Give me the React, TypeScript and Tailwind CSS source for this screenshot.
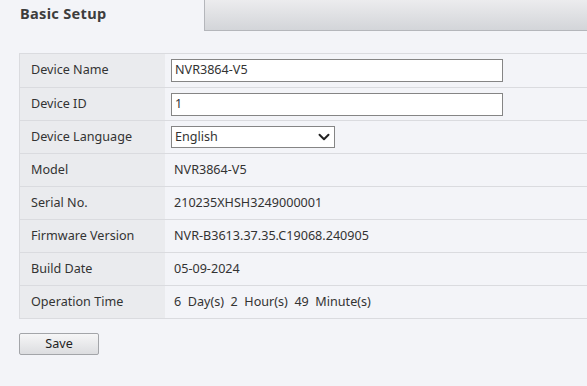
import { ChevronDown } from 'lucide-react';

const rows: { label: string; value?: string; kind?: 'input' | 'select' }[] = [
  { label: 'Device Name', value: 'NVR3864-V5', kind: 'input' },
  { label: 'Device ID', value: '1', kind: 'input' },
  { label: 'Device Language', value: 'English', kind: 'select' },
  { label: 'Model', value: 'NVR3864-V5' },
  { label: 'Serial No.', value: '210235XHSH3249000001' },
  { label: 'Firmware Version', value: 'NVR-B3613.37.35.C19068.240905' },
  { label: 'Build Date', value: '05-09-2024' },
  { label: 'Operation Time', value: '6\u00a0 Day(s)\u00a0 2\u00a0 Hour(s)\u00a0 49\u00a0 Minute(s)' },
];

export default function App() {
  return (
    <div className="w-[587px] h-[386px] overflow-hidden bg-[#f3f4f8] text-[#333] text-[12.6px]"
      style={{ fontFamily: '"Segoe UI", "Noto Sans", "Open Sans", sans-serif' }}>
      {/* Tab strip */}
      <div className="flex h-[31px]">
        <div className="w-[204px] pl-[20px] pt-[3px] text-[14.6px] font-bold text-[#3d3d3d] tracking-[0.3px]">
          Basic Setup
        </div>
        <div className="flex-1 border-l border-b border-[#b4b6bb] bg-gradient-to-b from-[#ececee] to-[#d3d5d9]" />
      </div>

      {/* Info table */}
      <div className="mt-[22px] ml-[19px] border-t border-b border-l border-[#dadbdf]">
        {rows.map((row, i) => (
          <div key={i} className={`flex h-[33px] ${i > 0 ? 'border-t border-[#dadbdf]' : ''}`}>
            <div className="w-[145px] bg-[#eaebee] pl-[11px] flex items-center">{row.label}</div>
            <div className="flex-1 flex items-center pl-[6px]">
              {row.kind === 'input' && (
                <div className="w-[332px] h-[23px] bg-white border border-[#858585] flex items-center px-[3px]">
                  {row.value}
                </div>
              )}
              {row.kind === 'select' && (
                <div className="w-[164px] h-[22px] bg-white border border-[#858585] flex items-center justify-between pl-[3px] pr-[1px]">
                  <span>{row.value}</span>
                  <ChevronDown size={18} strokeWidth={2.6} className="text-[#222]" />
                </div>
              )}
              {!row.kind && <span className="pl-[3px] whitespace-pre">{row.value}</span>}
            </div>
          </div>
        ))}
      </div>

      {/* Save */}
      <button className="mt-[14px] ml-[19px] w-[80px] h-[22px] rounded-[2px] border border-[#a3a5a9] bg-gradient-to-b from-[#f6f6f7] to-[#dcdde0] text-[#222] flex items-center justify-center">
        Save
      </button>
    </div>
  );
}
